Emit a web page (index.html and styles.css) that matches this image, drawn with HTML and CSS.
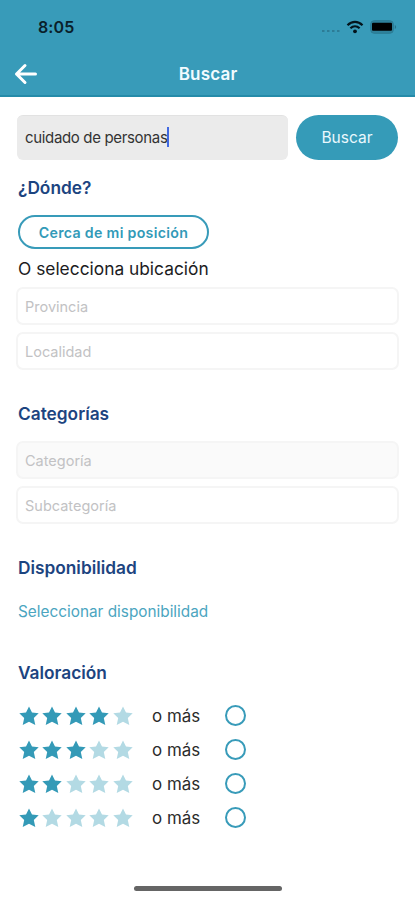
FILE: index.html
```html
<!DOCTYPE html>
<html lang="es">
<head>
<meta charset="utf-8">
<meta name="viewport" content="width=device-width, initial-scale=1">
<title>Buscar</title>
<link rel="stylesheet" href="styles.css">
</head>
<body>
<svg width="0" height="0" class="defs" aria-hidden="true">
  <symbol id="star" viewBox="0 0 20 20"><path d="M10 .5l3 6.100 6.700.7-4.900 4.700 1.500 7-6.300-3.200-6.300 3.200 1.500-7L.3 7.300 7 6.600z"/></symbol>
</svg>
<header class="header">
  <div class="status">
    <span class="time">8:05</span>
    <div class="indicators">
      <svg class="signal" width="20" height="4" viewBox="0 0 20 4"><path d="M1 2h2.500M6 2h2.500M11 2h2.500M16 2h2.500"/></svg>
      <svg class="wifi" width="18" height="14" viewBox="0 0 18 14"><path d="M1.500 5.300C6 .7 12 .7 16.500 5.300M4.400 8.300c2.800-2.700 6.400-2.700 9.200 0"/><circle cx="9" cy="11.300" r="1.900"/></svg>
      <svg class="battery" width="27" height="14" viewBox="0 0 27 14"><rect class="shell" x=".7" y=".7" width="22.600" height="12.600" rx="3.500"/><rect class="charge" x="2" y="2.800" width="20" height="8" rx="1"/><path class="shell-tip" d="M24.800 5v4c1.800-.7 1.800-3.300 0-4z"/></svg>
    </div>
  </div>
  <nav class="nav">
    <svg class="back" width="24" height="22" viewBox="0 0 24 22"><path d="M11 2.500L2.500 11l8.500 8.500M2.500 11h19"/></svg>
    <h1 class="title">Buscar</h1>
  </nav>
</header>
<main class="content">
  <div class="search">
    <div class="query"><span>cuidado de personas</span><i class="caret"></i></div>
    <button class="submit">Buscar</button>
  </div>
  <section class="where">
    <h2>¿Dónde?</h2>
    <button class="nearby">Cerca de mi posición</button>
    <p class="pick">O selecciona ubicación</p>
    <div class="field">Provincia</div>
    <div class="field">Localidad</div>
  </section>
  <section class="categories">
    <h2>Categorías</h2>
    <div class="field filled">Categoría</div>
    <div class="field">Subcategoría</div>
  </section>
  <section class="availability">
    <h2>Disponibilidad</h2>
    <a class="link">Seleccionar disponibilidad</a>
  </section>
  <section class="rating">
    <h2>Valoración</h2>
    <div class="rate-row"><div class="stars"><svg><use href="#star"/></svg><svg><use href="#star"/></svg><svg><use href="#star"/></svg><svg><use href="#star"/></svg><svg class="off"><use href="#star"/></svg></div><span class="more">o más</span><i class="radio"></i></div>
    <div class="rate-row"><div class="stars"><svg><use href="#star"/></svg><svg><use href="#star"/></svg><svg><use href="#star"/></svg><svg class="off"><use href="#star"/></svg><svg class="off"><use href="#star"/></svg></div><span class="more">o más</span><i class="radio"></i></div>
    <div class="rate-row"><div class="stars"><svg><use href="#star"/></svg><svg><use href="#star"/></svg><svg class="off"><use href="#star"/></svg><svg class="off"><use href="#star"/></svg><svg class="off"><use href="#star"/></svg></div><span class="more">o más</span><i class="radio"></i></div>
    <div class="rate-row"><div class="stars"><svg><use href="#star"/></svg><svg class="off"><use href="#star"/></svg><svg class="off"><use href="#star"/></svg><svg class="off"><use href="#star"/></svg><svg class="off"><use href="#star"/></svg></div><span class="more">o más</span><i class="radio"></i></div>
  </section>
</main>
<footer class="home"><div class="home-bar"></div></footer>
</body>
</html>
```

FILE: styles.css
```css
* { box-sizing: border-box; }
body {
  margin: 0;
  height: 900px;
  display: flex;
  flex-direction: column;
  overflow: hidden;
  background: #fff;
  font-family: Inter, "Liberation Sans", sans-serif;
  color: #1c1c1e;
}
h1, h2, p { margin: 0; }
button { font-family: inherit; padding: 0; white-space: nowrap; }
.defs { position: absolute; }

.header { height: 97px; flex: none; background: #389bb9; border-bottom: 2px solid #258ba9; }
.status { height: 53px; padding: 1px 18px 0 38px; display: flex; align-items: center; justify-content: space-between; }
.time { font-size: 16px; font-weight: 600; line-height: 20px; color: #0a1f2a; letter-spacing: 0.1px; }
.indicators { display: flex; align-items: center; }
.signal { margin: 8px 5px 0 0; fill: none; stroke: #28738b; stroke-width: 1.500px; }
.wifi { margin-right: 6px; margin-top: -1px; fill: none; stroke: #03141c; stroke-width: 2.200px; }
.wifi circle { fill: #03141c; stroke: none; }
.shell { fill: #2f829c; stroke: #2b7b94; }
.charge { fill: #000; }
.shell-tip { fill: #28738b; }
.nav { height: 42px; display: grid; grid-template-columns: 54px 1fr 54px; align-items: center; }
.back { margin-left: 14px; fill: none; stroke: #fff; stroke-width: 3px; stroke-linecap: round; stroke-linejoin: round; }
.title { text-align: center; font-size: 17px; line-height: 22px; font-weight: 600; color: #f2fbff; letter-spacing: 0.2px; padding-left: 1px; }

.content { flex: 1; padding: 18px 16px 0; }
.search { display: flex; gap: 8px; height: 45px; padding-left: 1px; }
.query { width: 271px; border-radius: 6px; background: #ebebeb; border-top: 1px solid #e2e2e2; padding: 0 0 2px 8px; display: flex; align-items: center; font-size: 15px; letter-spacing: -0.340px; color: #333; white-space: nowrap; }
.caret { width: 2px; height: 20px; background: #4169e1; }
.submit { width: 102px; border: 0; border-radius: 23px; background: #359bb8; color: #e9f8fd; font-size: 15.500px; }

h2 { padding-left: 2px; font-size: 17.300px; line-height: 22px; font-weight: 600; color: #1c4480; }
.where h2 { margin-top: 17px; }
.nearby { display: block; margin: 16px 0 0 2px; width: 191px; height: 34px; border: 2px solid #389bb9; border-radius: 17px; background: #fff; color: #329ab8; font-size: 14.200px; letter-spacing: 0.300px; font-weight: 600; }
.pick { margin: 9px 0 7px; padding-left: 2px; font-size: 17.350px; line-height: 22px; }
.field { height: 38px; width: 383px; border: 2px solid #f5f5f5; border-radius: 7px; padding-left: 7px; display: flex; align-items: center; font-size: 14.500px; color: #c2c2c4; }
.field + .field { margin-top: 7px; }
.filled { background: #fafafa; }
.categories h2 { margin: 33px 0 16px; }
.availability h2 { margin: 33px 0 22px; }
.link { display: block; padding-left: 2px; font-size: 15.350px; line-height: 22px; color: #4ba5bf; white-space: nowrap; }
.rating h2 { margin: 39px 0 14.500px; }
.rate-row { height: 34.100px; display: flex; align-items: center; }
.stars { display: flex; gap: 3.400px; width: 136px; padding-left: 3px; }
.stars svg { width: 20px; height: 20px; fill: #349ab7; }
.stars .off { fill: #b3dae4; }
.more { width: 73px; font-size: 16.900px; line-height: 22px; color: #2b2b2b; white-space: nowrap; }
.radio { width: 21px; height: 21px; border: 2px solid #389bb9; border-radius: 50%; }
.home { height: 14px; flex: none; display: flex; justify-content: center; }
.home-bar { width: 148px; height: 5px; border-radius: 3px; background: #656565; }
```
